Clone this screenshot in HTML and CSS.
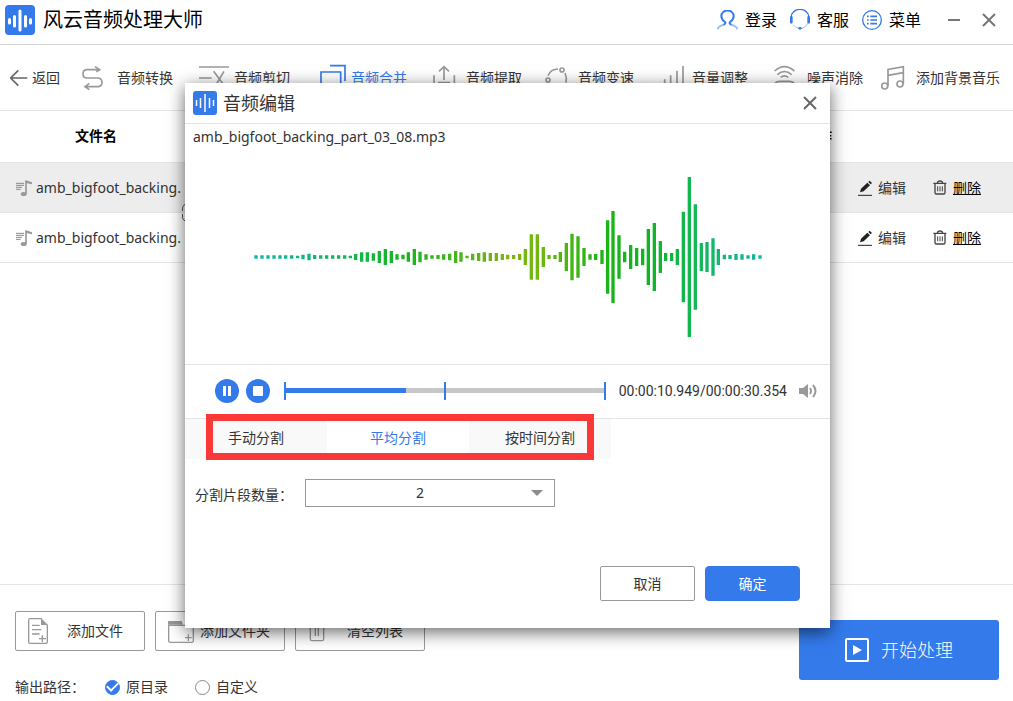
FILE: index.html
```html
<!DOCTYPE html>
<html lang="zh-CN">
<head>
<meta charset="utf-8">
<title>风云音频处理大师</title>
<link rel="stylesheet" href="styles.css">
</head>
<body>
<div class="app">
  <header class="titlebar">
    <svg class="logo" viewBox="0 0 30 30" aria-hidden="true"><rect width="30" height="30" rx="4" fill="#347aeb"/><path d="M4.500 14.500V18M9.500 11.500V21M15 6V25M20.500 11.500V21M25.500 14.500V18" stroke="#fff" stroke-width="3" stroke-linecap="round"/></svg>
    <h1 class="app-name">风云音频处理大师</h1>
    <nav class="account">
      <button class="account-btn" type="button">
        <svg width="21" height="20" viewBox="234 30 63 60" fill="none" stroke="#347aeb" stroke-width="6" aria-hidden="true"><path d="M251 75Q262 72 258 66Q247 59 247 48A18 16 0 0 1 284 48Q284 59 273 66Q269 72 280 75"/><path d="M236 88Q238 78 254 75M295 88Q293 78 277 75" stroke="#9fc0f6"/></svg>登录</button>
      <button class="account-btn" type="button">
        <svg width="20" height="21" viewBox="450 28 60 63" fill="none" stroke="#347aeb" aria-hidden="true"><path d="M453 54A27 25 0 0 1 507 54" stroke-width="4"/><path d="M454 53V68M506 53V68" stroke-width="8" stroke-linecap="round"/><path d="M460 76Q465 82 474 85M504 70Q499 82 486 86" stroke="#9fc0f6" stroke-width="3"/><ellipse cx="480" cy="86" rx="5" ry="3" fill="#347aeb" stroke-width="2"/></svg>客服</button>
      <button class="account-btn" type="button">
        <svg width="20" height="20" viewBox="0 0 60 60" fill="none" stroke="#347aeb" aria-hidden="true"><circle cx="30" cy="30" r="28" stroke-width="4"/><path d="M15 19H20M15 30H20M15 41H20M25 19H45M25 30H45M25 41H45" stroke-width="5"/></svg>菜单</button>
    </nav>
    <button class="icon-btn" type="button" aria-label="最小化"><svg width="14" height="14" viewBox="0 0 14 14"><path d="M1 7H13" stroke="#75757b" stroke-width="2"/></svg></button>
    <button class="icon-btn" type="button" aria-label="关闭"><svg width="14" height="14" viewBox="0 0 14 14"><path d="M1 1L13 13M13 1L1 13" stroke="#75757b" stroke-width="2"/></svg></button>
  </header>

  <nav class="toolbar">
    <button class="tool" type="button"><svg width="22" height="28" viewBox="30 195 66 84"><path d="M82 237H32M55 214L32 237L55 260"/></svg>返回</button>
    <button class="tool" type="button"><svg width="35" height="28" viewBox="246 192 105 84"><path d="M285 200L299 209L289 215M297 209H262Q249 209 249 221Q249 234 262 234H295Q306 236 306 247Q306 259 295 260H256M268 250L255 260L268 269"/></svg>音频转换</button>
    <button class="tool" type="button"><svg width="35" height="28" viewBox="597 192 105 84"><path d="M597 201H687M597 234H635M641 214L672 256M672 214L647 256"/></svg>音频剪切</button>
    <button class="tool tool-active" type="button"><svg width="31" height="28" viewBox="60 42 93 84"><path d="M90 47H135V93M63 66H122V120H63Z"/></svg>音频合并</button>
    <button class="tool" type="button"><svg width="33" height="28" viewBox="399 42 99 84"><path d="M432 90V50M417 64L432 50L447 64M402 76V110H463V76M414 98H450"/></svg>音频提取</button>
    <button class="tool" type="button"><svg width="33" height="28" viewBox="735 42 99 84"><circle cx="786" cy="60" r="6"/><circle cx="744" cy="90" r="6"/><path d="M744 77A33 33 0 0 1 774 57M795 69Q801 82 798 98M752 100Q768 116 787 108"/></svg>音频变速</button>
    <button class="tool" type="button"><svg width="29" height="28" viewBox="69 192 87 84"><path d="M74 238V262M92 226V262M111 212V262M129 198V262"/></svg>音量调整</button>
    <button class="tool" type="button"><svg width="33" height="28" viewBox="402 192 99 84"><path d="M404 213Q433 187 463 213M412 224Q433 205 455 224M422 232Q433 223 445 232M404 252Q408 244 420 244H447Q459 244 463 252"/></svg>噪声消除</button>
    <button class="tool" type="button"><svg width="35" height="28" viewBox="723 192 105 84"><circle cx="734" cy="258" r="9"/><circle cx="780" cy="252" r="9"/><path d="M744 258V208L790 200V252M744 226L790 218"/></svg>添加背景音乐</button>
  </nav>

  <main class="files">
    <table class="file-table">
      <colgroup><col class="col-name"><col><col class="col-op"><col class="col-edit"><col class="col-delete"></colgroup>
      <thead>
        <tr><th class="th-name">文件名</th><th></th><th class="th-op" colspan="3">操作</th></tr>
      </thead>
      <tbody>
        <tr class="selected">
          <td><span class="file-name"><svg width="16" height="16" viewBox="48 210 48 48"><path d="M48 220H72M48 226H72M48 232H66M48 238H62" stroke="#8a8a8a" stroke-width="3"/><path d="M78 252V213" stroke="#999" stroke-width="5"/><path d="M76 210L96 217V223L78 219Z" fill="#999"/><ellipse cx="71" cy="252" rx="9" ry="6" fill="#999"/></svg>amb_bigfoot_backing.</span></td>
          <td></td><td></td>
          <td><button class="row-btn" type="button"><svg width="14" height="16" viewBox="234 208 42 48"><path d="M240 245L243 234L262 216L270 224L251 242Z" fill="#222"/><path d="M265 214L269 210L276 217L272 221Z" fill="#222"/><path d="M234 254H276" stroke="#222" stroke-width="3"/></svg>编辑</button></td>
          <td><button class="row-btn row-delete" type="button"><svg width="14" height="16" viewBox="458 210 42 48" fill="none" stroke="#444" stroke-width="4"><path d="M459 220H498M471 219Q472 213 479 213Q486 213 487 219M464 222V248Q464 252 468 252H490Q494 252 494 248V222"/><path d="M472 229V244M479 229V244M486 229V244" stroke-width="3"/></svg><span>删除</span></button></td>
        </tr>
        <tr>
          <td><span class="file-name"><svg width="16" height="16" viewBox="48 210 48 48"><path d="M48 220H72M48 226H72M48 232H66M48 238H62" stroke="#8a8a8a" stroke-width="3"/><path d="M78 252V213" stroke="#999" stroke-width="5"/><path d="M76 210L96 217V223L78 219Z" fill="#999"/><ellipse cx="71" cy="252" rx="9" ry="6" fill="#999"/></svg>amb_bigfoot_backing.</span></td>
          <td></td><td></td>
          <td><button class="row-btn" type="button"><svg width="14" height="16" viewBox="234 208 42 48"><path d="M240 245L243 234L262 216L270 224L251 242Z" fill="#222"/><path d="M265 214L269 210L276 217L272 221Z" fill="#222"/><path d="M234 254H276" stroke="#222" stroke-width="3"/></svg>编辑</button></td>
          <td><button class="row-btn row-delete" type="button"><svg width="14" height="16" viewBox="458 210 42 48" fill="none" stroke="#444" stroke-width="4"><path d="M459 220H498M471 219Q472 213 479 213Q486 213 487 219M464 222V248Q464 252 468 252H490Q494 252 494 248V222"/><path d="M472 229V244M479 229V244M486 229V244" stroke-width="3"/></svg><span>删除</span></button></td>
        </tr>
      </tbody>
    </table>
    <svg class="pointer" width="20" height="20" viewBox="0 0 20 20" fill="none" stroke="#555" aria-hidden="true"><path d="M.5 8V6Q.5 1 6 .5H14M.5 11V14Q.5 18 6 18.500H14"/></svg>
  </main>

  <footer class="footer">
    <div class="footer-left">
      <div class="file-actions">
        <button class="outline-btn" type="button"><svg width="39" height="28" viewBox="84 111 117 84"><path d="M125 116H90Q86 116 86 120V186Q86 190 90 190H138Q142 190 142 186V134M96 136H119M96 149H124M96 162H119M117 176H138M127 166V186"/><path d="M123 114L144 135H123Z" fill="#999" stroke="none"/></svg>添加文件</button>
        <button class="outline-btn" type="button"><svg width="32" height="28" viewBox="504 111 96 84"><path d="M504 123H545L549 134H504Z" fill="#999" stroke="none"/><path d="M506 134V182Q506 187 511 187H575Q580 187 580 182V136H506M555 173H575M565 163V183"/></svg>添加文件夹</button>
        <button class="outline-btn" type="button"><svg width="39" height="28" viewBox="924 111 117 84"><path d="M931 130V177Q931 182 936 182H966Q971 182 971 177V130M926 126H976M946 140V168M955 140V168"/></svg>清空列表</button>
      </div>
      <fieldset class="output">
        <legend class="output-legend">输出路径：</legend>
        <label class="radio"><input type="radio" name="output" checked>原目录</label>
        <label class="radio"><input type="radio" name="output">自定义</label>
      </fieldset>
    </div>
    <button class="start-btn" type="button"><svg width="24" height="24" viewBox="0 0 24 24"><rect x="1" y="1" width="22" height="22" rx="1" fill="none" stroke="#fff" stroke-width="2"/><path d="M8 7L17 12L8 17Z" fill="#fff"/></svg>开始处理</button>
  </footer>

  <div class="overlay">
    <section class="dialog" role="dialog" aria-labelledby="dialog-title">
      <header class="dialog-head">
        <svg width="24" height="24" viewBox="0 0 24 24" aria-hidden="true"><rect width="24" height="24" rx="3" fill="#347aeb"/><path d="M3.500 9V15M7.500 7V17M12 3V21M16.500 7V17M20.500 9V15" stroke="#fff" stroke-width="1.500"/></svg>
        <h2 class="dialog-title" id="dialog-title">音频编辑</h2>
        <button class="icon-btn" type="button" aria-label="关闭"><svg width="14" height="14" viewBox="0 0 14 14"><path d="M1 1L13 13M13 1L1 13" stroke="#666" stroke-width="2"/></svg></button>
      </header>
      <div class="wave-panel">
        <p class="wave-name">amb_bigfoot_backing_part_03_08.mp3</p>
        <svg class="wave" viewBox="36 -243 1536 486" aria-hidden="true">
          <defs>
            <linearGradient id="wave-color" gradientUnits="userSpaceOnUse" x1="48" y1="0" x2="1560" y2="0">
              <stop offset="0" stop-color="#12b6ae"/><stop offset=".2" stop-color="#10b84a"/><stop offset=".3" stop-color="#1cb41e"/><stop offset=".39" stop-color="#44b41e"/><stop offset=".5" stop-color="#84b410"/><stop offset=".56" stop-color="#70b810"/><stop offset=".68" stop-color="#1eb414"/><stop offset=".78" stop-color="#10b428"/><stop offset=".88" stop-color="#14b85a"/><stop offset="1" stop-color="#12b6a0"/>
            </linearGradient>
          </defs>
          <path fill="none" stroke="url(#wave-color)" stroke-width="10" d="M48-5V5M66-5V5M84-5V5M102-5V5M120-5V5M137-5V5M155-5V5M173-4V4M189-7V7M207-10V10M224-6V6M242-5V5M260-5V5M278-5V5M296-5V5M314-5V5M331-4V4M347-9V9M365-14V14M382-14V14M400-11V11M418-18V18M436-24V24M454-18V18M471-8V8M489-7V7M505-14V14M523-24V24M540-16V16M558-8V8M576-5V5M594-6V6M611-8V8M629-10V10M647-18V18M663-14V14M681-4V4M698-10V10M716-12V12M733-14V14M751-12V12M769-12V12M787-9V9M803-7V7M821-6V6M839-9V9M856-24V24M874-68V68M892-68V68M910-30V30M927-6V6M945-6V6M961-15V15M979-42V42M996-70V70M1014-62V62M1032-27V27M1050-8V8M1067-9V9M1086-21V21M1103-110V110M1119-138V138M1137-65V65M1154-16V16M1172-36V36M1190-27V27M1208-25V25M1225-84V84M1243-102V102M1261-48V48M1277-12V12M1295-12V12M1312-24V24M1330-136V136M1348-240V240M1366-158V158M1384-42V42M1401-45V45M1419-56V56M1435-24V24M1453-7V7M1470-6V6M1488-9V9M1506-8V8M1524-5V5M1541-8V8M1560-5V5"/>
        </svg>
      </div>
      <div class="player">
        <button class="round-btn" type="button" aria-label="暂停"><svg width="24" height="24" viewBox="0 0 24 24"><path d="M9.500 7V17M14.500 7V17" stroke="#fff" stroke-width="3"/></svg></button>
        <button class="round-btn" type="button" aria-label="停止"><svg width="24" height="24" viewBox="0 0 24 24"><rect x="7" y="7" width="10" height="10" rx="1" fill="#fff"/></svg></button>
        <div class="seek">
          <input class="seek-range" type="range" min="0" max="30354" value="10949" aria-label="播放进度">
          <div class="seek-marks"><span class="mark"></span><span class="mark"></span><span class="mark"></span></div>
        </div>
        <span class="time">00:00:10.949/00:00:30.354</span>
        <button class="icon-btn volume-btn" type="button" aria-label="音量"><svg width="18" height="16" viewBox="0 0 18 16"><path d="M0 5H4L9 1V15L4 11H0Z" fill="#999"/><path d="M11 5Q13 8 11 11M14 2Q19 8 14 14" fill="none" stroke="#999" stroke-width="2"/></svg></button>
      </div>
      <div class="tabs">
        <div class="tab-list" role="tablist">
          <button class="tab" type="button" role="tab">手动分割</button>
          <button class="tab tab-active" type="button" role="tab" aria-selected="true">平均分割</button>
          <button class="tab" type="button" role="tab">按时间分割</button>
        </div>
        <div class="highlight"></div>
      </div>
      <div class="form-row">
        <label class="form-label" for="parts">分割片段数量：</label>
        <div class="select-wrap">
          <select class="select" id="parts"><option>2</option></select>
          <svg class="select-arrow" width="12" height="6" viewBox="0 0 12 6" aria-hidden="true"><path d="M0 0H12L6 6Z" fill="#8c8c8c"/></svg>
        </div>
      </div>
      <div class="dialog-actions">
        <button class="dialog-btn" type="button">取消</button>
        <button class="dialog-btn dialog-btn-primary" type="button">确定</button>
      </div>
    </section>
  </div>
</div>
</body>
</html>
```

FILE: styles.css
```css
* { box-sizing: border-box; }

body {
  margin: 0;
  background: #fff;
  color: #333;
  font: 14px/20px "Noto Sans", "Noto Sans CJK SC", sans-serif;
}

button {
  margin: 0;
  padding: 0;
  border: 0;
  background: none;
  color: inherit;
  font: inherit;
}

svg { flex: none; display: block; }

.app {
  position: relative;
  display: flex;
  flex-direction: column;
  min-height: 100vh;
  overflow: hidden;
}

/* Title bar */
.titlebar {
  display: flex;
  align-items: center;
  height: 45px;
  padding: 0 17px 5px 5px;
  border-bottom: 1px solid #d4d4d4;
}
.logo { width: 30px; height: 30px; }
.app-name {
  margin: 0 auto 0 8px;
  color: #000;
  font-size: 20px;
  font-weight: 400;
  line-height: 28px;
}
.account { display: flex; gap: 13px; margin-right: 26px; }
.account-btn {
  display: flex;
  align-items: center;
  gap: 7px;
  color: #000;
  font-size: 16px;
  line-height: 24px;
}
.icon-btn { flex: none; }
.icon-btn + .icon-btn { margin-left: 21px; }

/* Toolbar */
.toolbar {
  display: grid;
  grid-template-columns: 72fr 117fr 121fr 113fr 112fr 118fr 111fr 107fr 120fr;
  align-items: center;
  height: 66px;
  padding: 0 12px 0 10px;
  border-bottom: 1px solid #e4e4e4;
}
.tool {
  display: flex;
  align-items: center;
  min-width: 0;
  white-space: nowrap;
}
.tool svg { fill: none; stroke: #999; stroke-width: 5; }
.tool:first-child svg { stroke: #666; }
.tool-active { color: #347aeb; }
.tool-active svg { stroke: #347aeb; }

/* File list */
.files { position: relative; flex: 1; }
.file-table {
  width: 100%;
  border-collapse: collapse;
  table-layout: fixed;
}
.col-name { width: 192px; }
.col-op { width: 54px; }
.col-edit { width: 75px; }
.col-delete { width: 80px; }
.file-table th {
  height: 51px;
  padding: 0;
  border-bottom: 1px solid #e4e4e4;
  color: #000;
  font-weight: 700;
}
.file-table .th-op { text-align: left; }
.file-table td {
  height: 50px;
  padding: 2px 0 0;
  border-bottom: 1px solid #e4e4e4;
}
.selected { background: #ededed; }
.file-name {
  display: flex;
  align-items: center;
  gap: 4px;
  padding-left: 16px;
  white-space: nowrap;
}
.row-btn {
  display: flex;
  align-items: center;
  gap: 6px;
}
.row-delete { color: #000; text-decoration: underline; }
.pointer { position: absolute; left: 182px; top: 92px; }

/* Footer */
.footer {
  display: flex;
  align-items: flex-start;
  justify-content: space-between;
  height: 117px;
  padding: 26px 14px 0 15px;
  border-top: 1px solid #e4e4e4;
}
.file-actions { display: flex; gap: 10px; }
.outline-btn {
  display: flex;
  align-items: center;
  width: 130px;
  height: 40px;
  padding-left: 12px;
  border: 1px solid #999;
  border-radius: 2px;
  white-space: nowrap;
}
.outline-btn svg { fill: none; stroke: #999; stroke-width: 4; }
.output {
  display: flex;
  align-items: center;
  gap: 27px;
  margin: 26px 0 0;
  padding: 0;
  border: 0;
}
.output-legend { float: left; width: 90px; margin-right: -27px; padding: 0; }
.radio { display: flex; align-items: center; gap: 6px; }
.radio input {
  appearance: none;
  width: 15px;
  height: 15px;
  margin: 0;
  border: 1px solid #888;
  border-radius: 50%;
  background: #fff;
}
.radio input:checked {
  display: grid;
  place-items: center;
  border-color: #347aeb;
  background: #347aeb;
}
.radio input:checked::before {
  content: "";
  width: 9px;
  height: 5px;
  margin-bottom: 3px;
  border: solid #fff;
  border-width: 0 0 2px 2px;
  transform: rotate(-45deg);
}
.start-btn {
  display: flex;
  align-items: center;
  justify-content: center;
  gap: 12px;
  width: 200px;
  height: 60px;
  margin-top: 9px;
  border-radius: 3px;
  background: #347aeb;
  color: #fff;
  font-size: 18px;
  font-weight: 300;
}

/* Edit dialog */
.overlay {
  position: absolute;
  inset: 0;
  padding: 83px 183px 0 185px;
}
.dialog {
  background: #fff;
  box-shadow: 0 4px 16px rgba(0, 0, 0, .6);
}
.dialog-head {
  display: flex;
  align-items: center;
  height: 41px;
  padding: 0 13px 0 8px;
  border-bottom: 1px solid #e4e4e4;
}
.dialog-title {
  margin: 0 auto 0 6px;
  font-size: 18px;
  font-weight: 400;
  line-height: 24px;
}
.wave-panel {
  padding: 3px 8px 26px;
  border-bottom: 1px solid #e4e4e4;
}
.wave-name { margin: 0 0 29px; }
.wave { width: 512px; height: 162px; margin: 0 auto; }
.player {
  display: flex;
  align-items: center;
  height: 54px;
  padding: 0 13px 2px 30px;
  border-bottom: 1px solid #e4e4e4;
}
.round-btn {
  flex: none;
  margin-right: 7px;
  border-radius: 50%;
  background: #347aeb;
}
.seek {
  position: relative;
  flex: 1;
  display: flex;
  align-items: center;
  height: 18px;
  margin: 0 13px 0 7px;
}
.seek-range {
  appearance: none;
  width: 100%;
  height: 5px;
  margin: 0;
  border-radius: 3px;
  background: linear-gradient(to right, #347aeb 38%, #c6c6c6 38%);
}
.seek-range::-webkit-slider-thumb { appearance: none; width: 1px; height: 5px; }
.seek-marks {
  position: absolute;
  inset: 0;
  display: flex;
  justify-content: space-between;
  pointer-events: none;
}
.mark { width: 2px; background: #347aeb; }
.time { font-family: Roboto, "Noto Sans", sans-serif; }
.volume-btn { margin-left: 12px; }
.tabs { position: relative; }
.tab-list { display: flex; }
.tab {
  width: 142px;
  height: 40px;
  padding-bottom: 2px;
  background: #f9f9f9;
}
.tab-active { background: #fff; color: #347aeb; }
.highlight {
  position: absolute;
  left: 21px;
  top: -5px;
  width: 388px;
  height: 46px;
  border: 7px solid #fb3838;
  pointer-events: none;
}
.form-row {
  display: flex;
  align-items: center;
  padding: 20px 10px 0;
}
.form-label { width: 110px; padding-top: 3px; white-space: nowrap; }
.select-wrap { display: grid; align-items: center; width: 250px; }
.select {
  grid-area: 1 / 1;
  appearance: none;
  height: 28px;
  padding: 0 20px 0 0;
  border: 1px solid #999;
  border-radius: 0;
  background: #fff;
  color: #333;
  font: inherit;
  text-align: center;
  text-align-last: center;
}
.select-arrow {
  grid-area: 1 / 1;
  justify-self: end;
  margin-right: 12px;
  pointer-events: none;
}
.dialog-actions {
  display: flex;
  justify-content: flex-end;
  gap: 10px;
  padding: 59px 30px 27px;
}
.dialog-btn {
  width: 95px;
  height: 35px;
  border: 1px solid #999;
  border-radius: 2px;
}
.dialog-btn-primary {
  border-color: #347aeb;
  border-radius: 4px;
  background: #347aeb;
  color: #fff;
}
```
